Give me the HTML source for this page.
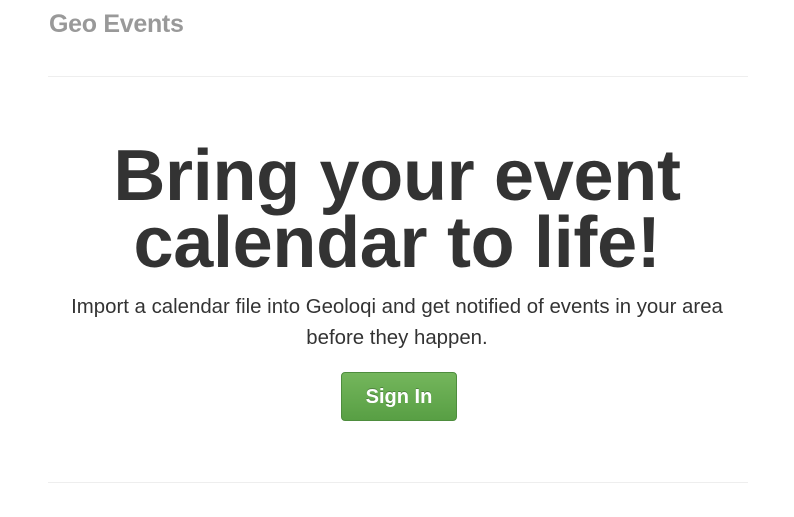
<!DOCTYPE html>
<html><head><style>
body{margin:0;background:#fff;font-family:"Liberation Sans",Arial,sans-serif;color:#333;}
.brand{position:absolute;left:49px;top:10px;font-size:25px;font-weight:bold;color:#999;letter-spacing:-0.3px}
.hr{position:absolute;left:48px;width:700px;height:1px;background:#eee}
h1{position:absolute;left:0;width:794px;top:143px;margin:0;text-align:center;font-size:72px;line-height:67px;font-weight:bold;color:#333;letter-spacing:-0.3px}
p{position:absolute;left:0;width:794px;top:292px;margin:0;text-align:center;font-size:20.4px;line-height:31px;color:#333}
.btn{position:absolute;left:341px;top:372px;width:116px;height:49px;border:1px solid #4e8d3e;border-radius:4px;background:linear-gradient(#74b65c,#589f44);color:#fff;font-size:20px;font-weight:bold;text-align:center;line-height:49px;box-sizing:border-box;text-shadow:0 -1px 0 rgba(0,0,0,.25)}
</style></head><body>
<div class="brand">Geo Events</div>
<div class="hr" style="top:76px"></div>
<h1>Bring your event<br>calendar to life!</h1>
<p>Import a calendar file into Geoloqi and get notified of events in your area<br>before they happen.</p>
<div class="btn">Sign In</div>
<div class="hr" style="top:482px"></div>
</body></html>
